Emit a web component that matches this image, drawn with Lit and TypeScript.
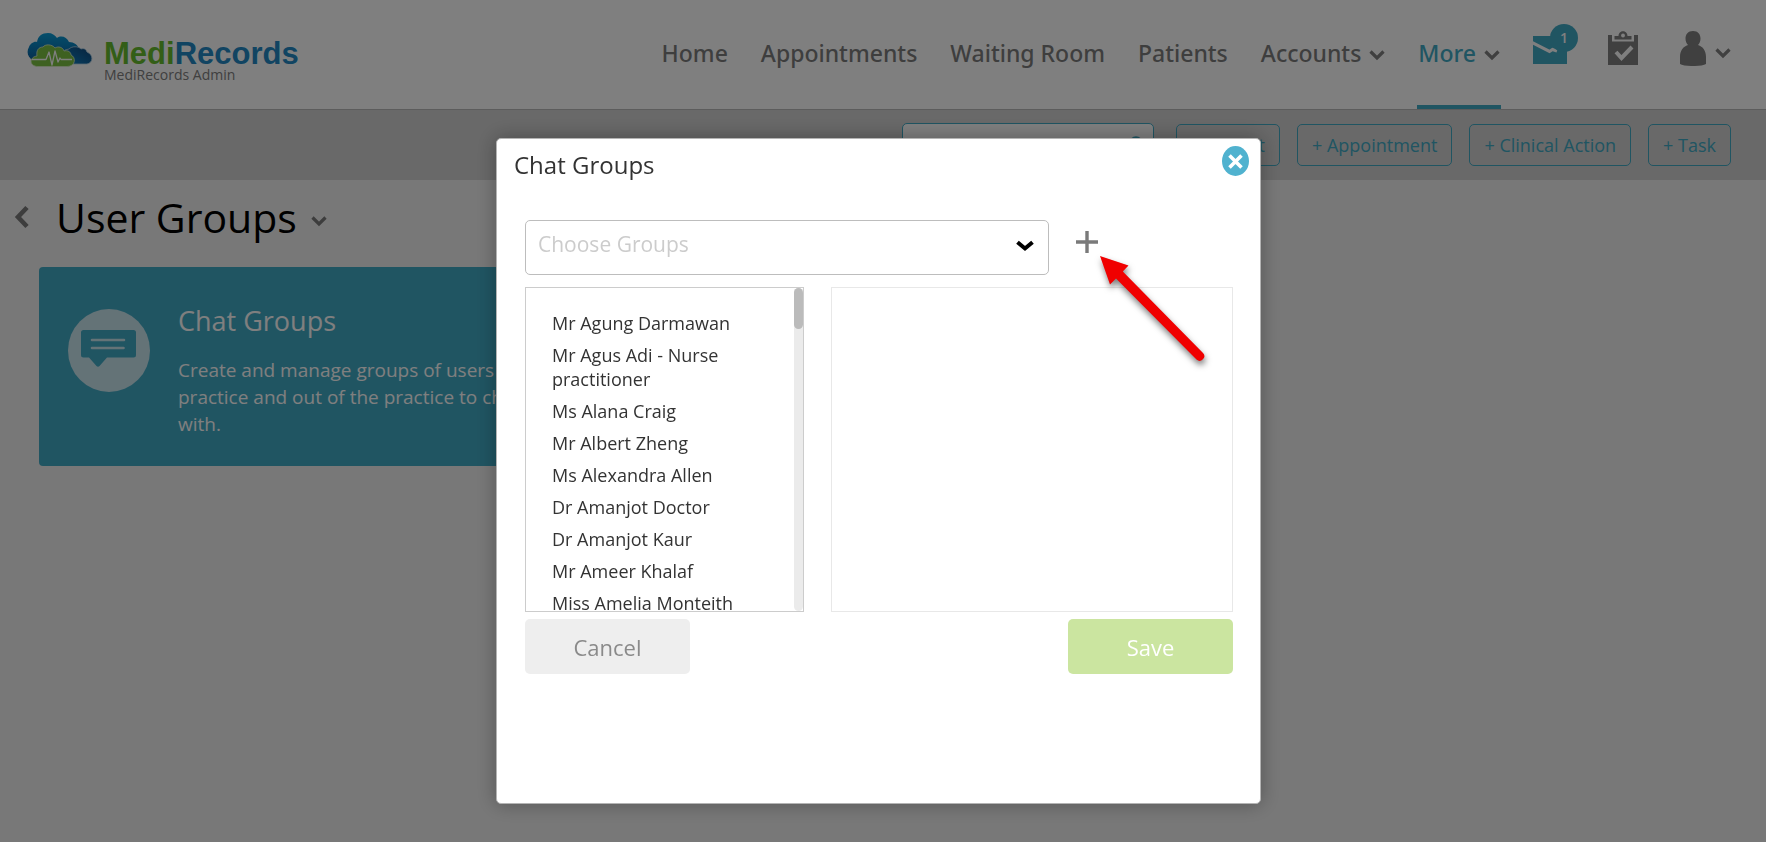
import { LitElement, html, css } from "lit";
import { customElement, state } from "lit/decorators.js";

const chevron = () => html`
  <svg class="caret" width="16" height="12" viewBox="0 0 16 12" aria-hidden="true">
    <path d="M1.500 2.500 L8 9 L14.500 2.500" fill="none" stroke="currentColor" stroke-width="3.200"/>
  </svg>`;

@customElement("mr-logo")
class MrLogo extends LitElement {
  static styles = css`
    :host { display: block; }
    .logo { display: flex; gap: 11px; color: inherit; text-decoration: none; }
    .cloud { flex: none; }
    .text { padding-top: 8px; }
    .word { font: 700 31px/27px "Liberation Sans", Arial, sans-serif; color: #2389c4; }
    .green { color: #66bc2e; }
    .sub { font-size: 14px; line-height: 16px; color: #808080; }
  `;
  render() {
    return html`<a class="logo" href="#home">
      <svg class="cloud" width="66" height="36" viewBox="0 0 66 36" aria-hidden="true">
        <defs>
          <linearGradient id="b" x1="0" y1="0" x2="0" y2="1"><stop offset="0" stop-color="#0a9ed8"/><stop offset="1" stop-color="#0d5c9c"/></linearGradient>
          <linearGradient id="c" x1="1" y1="0" x2="0" y2="1"><stop offset="0" stop-color="#114478"/><stop offset="1" stop-color="#0f82c4"/></linearGradient>
        </defs>
        <path fill="url(#b)" d="M6 28 C1 26 -1 20 2 15 C3 12 7 9 10 10 C11 4 15 1 21 1 C25 1 28 3 30 6 C34 3 40 5 42 10 C47 10 51 13 52 17 L40 30 Z"/>
        <path fill="url(#c)" stroke="#b8d4e6" stroke-width="0.800" d="M40 32 L60 32 C66 31 67 23 60 20 C59 17 57 16 54 17 C51 14 45 14 42 17 L38 18 Z"/>
        <path fill="#7cc243" stroke="#dcedc8" stroke-width="0.800" d="M11 34.500 C2 34.500 2 25 10 24 C9 18 12 15 16 15 C18 12 25 12 28 16 C31 14 36 15 37 19 C41 18 44 20 44 23 C49 25 49 34.500 40 34.500 Z"/>
        <path fill="none" stroke="#fff" stroke-width="1.300" stroke-linejoin="round" d="M5 27.500 H19 L22 20 L25 33 L28 19 L31 30 L33 26 L34 27.500 H45"/>
      </svg>
      <span class="text">
        <div class="word"><span class="green">Medi</span>Records</div>
        <div class="sub">MediRecords Admin</div>
      </span>
    </a>`;
  }
}

@customElement("mr-header")
class MrHeader extends LitElement {
  static styles = css`
    :host { display: block; }
    .bar { display: flex; justify-content: space-between; height: 110px; padding: 0 35px 0 27px; background: #fff; border-bottom: 1px solid #b8b8b8; box-sizing: border-box; }
    mr-logo { margin-top: 32px; }
    .right { display: flex; align-items: stretch; }
    .nav { display: flex; gap: 31px; }
    .link { display: flex; align-items: center; gap: 8px; padding: 0 1px; font-family: "Noto Sans", "Open Sans", sans-serif; font-size: 23px; font-weight: 500; color: #7c7c7c; text-decoration: none; border-bottom: 4px solid transparent; }
    .link.active { color: #41aac5; border-color: #41aac5; }
    .caret { color: #808080; margin-top: 4px; }
    .tools { display: flex; align-items: flex-start; margin-left: 32px; gap: 30px; padding-top: 24px; }
    .tool { display: flex; align-items: flex-start; gap: 9px; border: 0; background: none; padding: 0; color: #808080; font: inherit; }
    .user { margin-left: 12px; }
    .tool .caret { margin-top: 23px; }
    .shape { margin-top: 7px; }
  `;
  render() {
    const links = ["Home", "Appointments", "Waiting Room", "Patients"];
    return html`<header class="bar">
      <mr-logo></mr-logo>
      <div class="right">
        <nav class="nav">
          ${links.map((l) => html`<a class="link" href="#">${l}</a>`)}
          <a class="link" href="#">Accounts ${chevron()}</a>
          <a class="link active" href="#">More ${chevron()}</a>
        </nav>
        <div class="tools">
          <button class="tool" aria-label="Messages, 1 unread">
            <svg width="45" height="41" viewBox="0 0 45 41">
              <path fill="#41aac5" d="M0 12 H34 V40 H0 Z"/>
              <path fill="none" stroke="#fff" stroke-width="3.200" d="M-1 18.500 L16.500 27.500 L19.500 25.500 L24 27"/>
              <circle cx="31" cy="14" r="14" fill="#41aac5"/>
              <text x="31" y="19" text-anchor="middle" fill="#fff" font-size="14" font-weight="600">1</text>
            </svg>
          </button>
          <button class="tool" aria-label="Tasks">
            <svg class="shape" width="30" height="35" viewBox="0 0 30 35">
              <path fill="#808080" d="M0 4 H4 V10.500 H26 V4 H30 V34 H0 Z"/>
              <path fill="#808080" d="M6.500 5 H10.500 C10.500 -1.500 19.500 -1.500 19.500 5 H23.500 V8.500 H6.500 Z"/>
              <circle cx="15" cy="4.500" r="1.900" fill="#fff"/>
              <path fill="none" stroke="#fff" stroke-width="4" d="M8 21 L13.500 27 L24 16"/>
            </svg>
          </button>
          <button class="tool user" aria-label="Account">
            <svg class="shape" width="26" height="35" viewBox="0 0 26 35">
              <path fill="#808080" d="M13 0 C18 0 20.500 3.500 20.500 7.500 C20.500 10.500 19.500 12.500 18 14 C23 15.500 26 20 26 26 V33 C22 35.700 4 35.700 0 33 V26 C0 20 3 15.500 8 14 C6.500 12.500 5.500 10.500 5.500 7.500 C5.500 3.500 8 0 13 0 Z"/>
            </svg>
            ${chevron()}
          </button>
        </div>
      </div>
    </header>`;
  }
}

@customElement("mr-toolbar")
class MrToolbar extends LitElement {
  static styles = css`
    :host { display: block; }
    .bar { display: flex; justify-content: flex-end; align-items: center; gap: 17px; height: 70px; padding-right: 35px; background: #d2d2d2; }
    .search { display: flex; align-items: center; box-sizing: border-box; width: 252px; height: 44px; padding: 0 9px 0 12px; margin-right: 5px; border: 1px solid #41aac5; border-radius: 5px; background: #fff; color: #41aac5; }
    .field { flex: 1; min-width: 0; border: 0; background: none; font: inherit; font-size: 16px; padding: 0 2px; }
    .field::placeholder { color: #999; }
    .add { height: 42px; padding: 0 14px; border: 1px solid #41aac5; border-radius: 5px; background: none; color: #41aac5; font: inherit; font-size: 18px; }
  `;
  render() {
    return html`<div class="bar">
      <label class="search">
        <input class="field" type="search" placeholder="Find patient" aria-label="Find patient" />
        <svg width="18" height="18" viewBox="0 0 18 18" aria-hidden="true"><circle cx="10" cy="7" r="5.500" fill="none" stroke="currentColor" stroke-width="2.500"/><path d="M6 11 L1 17" stroke="currentColor" stroke-width="3"/></svg>
      </label>
      ${["Patient", "Appointment", "Clinical Action", "Task"].map((t) => html`<button class="add">+ ${t}</button>`)}
    </div>`;
  }
}

@customElement("mr-group-card")
class MrGroupCard extends LitElement {
  static styles = css`
    :host { display: block; }
    .card { display: flex; gap: 28px; box-sizing: border-box; min-height: 199px; padding: 36px 29px 24px; border-radius: 4px; background: #41aac5; color: #fff; text-decoration: none; }
    .icon { flex: none; margin-top: 6px; }
    .name { margin: 0; font-size: 27px; line-height: 36px; font-weight: 400; }
    .about { margin: 18px 0 0; font-size: 19px; line-height: 27px; }
  `;
  render() {
    return html`<a class="card" href="#chat-groups">
      <svg class="icon" width="82" height="83" viewBox="0 0 82 83" aria-hidden="true">
        <ellipse cx="41" cy="41.500" rx="41" ry="41.500" fill="#c8e6ef"/>
        <path fill="#41aac5" d="M15.500 21 H65.500 Q68 21 68 23.500 V46 Q68 48.500 65.500 48.500 H39 L31.500 57 Q30 58.500 28.500 57 L21 48.500 H15.500 Q13 48.500 13 46 V23.500 Q13 21 15.500 21 Z"/>
        <path stroke="#c8e6ef" stroke-width="2.600" stroke-linecap="round" d="M24 31 H56 M24 39 H55.500"/>
      </svg>
      <div>
        <h2 class="name">Chat Groups</h2>
        <p class="about">Create and manage groups of users in the practice and out of the practice to chat with.</p>
      </div>
    </a>`;
  }
}

@customElement("mr-chat-dialog")
class MrChatDialog extends LitElement {
  @state() private people = [
    "Mr Agung Darmawan", "Mr Agus Adi - Nurse practitioner", "Ms Alana Craig", "Mr Albert Zheng",
    "Ms Alexandra Allen", "Dr Amanjot Doctor", "Dr Amanjot Kaur", "Mr Ameer Khalaf", "Miss Amelia Monteith",
  ];
  static styles = css`
    :host { display: block; }
    .dialog { position: relative; box-sizing: border-box; min-height: 666px; padding: 6px 27px 28px 28px; border: 1px solid #b4b4b4; border-radius: 5px; background: #fff; box-shadow: 0 0 20px rgba(0, 0, 0, 0.3); color: #333; }
    .head { display: flex; justify-content: space-between; align-items: flex-start; height: 75px; margin: 0 -16px 0 -11px; }
    .title { margin: 0; font-size: 24px; line-height: 40px; font-weight: 400; }
    .close { display: block; padding: 1px 0 0; border: 0; background: none; line-height: 0; }
    .choose { display: flex; gap: 25px; margin-bottom: 12px; }
    .pick { position: relative; flex: none; width: 524px; color: #000; }
    .select { appearance: none; display: block; width: 100%; height: 55px; padding: 0 48px 7px 12px; border: 1px solid #bdbdbd; border-radius: 5px; background: #fff; color: #ccc; font: inherit; font-size: 21px; }
    .arrow { position: absolute; right: 15px; top: 20px; pointer-events: none; }
    .plus { align-self: flex-start; margin-top: 9px; padding: 0; border: 0; background: none; line-height: 0; }
    .panes { display: grid; grid-template-columns: 279px 1fr; gap: 27px; height: 325px; }
    .people { display: flex; min-height: 0; border: 1px solid #ccc; }
    .names { flex: 1; margin: 0; padding: 19px 26px 0; list-style: none; overflow: hidden; }
    .person { display: block; width: 100%; padding: 4px 0; border: 0; background: none; color: #333; font: inherit; font-size: 18px; line-height: 24px; text-align: left; }
    .track { flex: none; width: 9px; border-radius: 5px; background: #ebebeb; }
    .thumb { height: 41px; border-radius: 5px; background: #bbb; }
    .chosen { border: 1px solid #e8e8e8; }
    .foot { display: flex; justify-content: space-between; margin-top: 7px; }
    .btn { width: 165px; height: 55px; border: 0; border-radius: 5px; font: inherit; font-size: 22px; }
    .cancel { background: #eee; color: #8a8a8a; }
    .save { background: #cbe5a0; color: #fff; }
    .pointer { position: absolute; left: 597px; top: 111px; pointer-events: none; filter: drop-shadow(1px 4px 3px rgba(0, 0, 0, 0.5)); }
  `;
  render() {
    return html`<section class="dialog" role="dialog" aria-labelledby="t">
      <div class="head">
        <h2 class="title" id="t">Chat Groups</h2>
        <button class="close" aria-label="Close">
          <svg width="27" height="30" viewBox="0 0 27 30"><ellipse cx="13.500" cy="15" rx="13.500" ry="15" fill="#50b2cf"/><path d="M7.500 9.500 L19.500 21.500 M19.500 9.500 L7.500 21.500" stroke="#fff" stroke-width="3.600"/></svg>
        </button>
      </div>
      <div class="choose">
        <div class="pick">
          <select class="select" aria-label="Choose Groups"><option>Choose Groups</option></select>
          <svg class="arrow" width="18" height="12" viewBox="0 0 18 12" aria-hidden="true"><path d="M1.500 2.200 L9 8.500 L16.500 2.200" fill="none" stroke="#000" stroke-width="4"/></svg>
        </div>
        <button class="plus" aria-label="Add group">
          <svg width="26" height="26" viewBox="0 0 26 26"><path d="M13 2 V24 M2 13 H24" stroke="#7a7a7a" stroke-width="3.400"/></svg>
        </button>
      </div>
      <div class="panes">
        <div class="people">
          <ul class="names">${this.people.map((p) => html`<li><button class="person">${p}</button></li>`)}</ul>
          <div class="track"><div class="thumb"></div></div>
        </div>
        <div class="chosen"></div>
      </div>
      <div class="foot">
        <button class="btn cancel">Cancel</button>
        <button class="btn save">Save</button>
      </div>
      <svg class="pointer" width="120" height="120" viewBox="1094 250 120 120" aria-hidden="true">
        <path fill="#f00000" d="M1100 256 L1128.500 265.500 L1122.800 271.600 L1203 353 A4.600 4.600 0 0 1 1196.500 359.500 L1116 278.500 L1110 284.500 Z"/>
      </svg>
    </section>`;
  }
}

@customElement("app-root")
class AppRoot extends LitElement {
  static styles = css`
    :host { display: block; min-height: 100vh; background: #f0f0f0; font-family: "Open Sans", "Noto Sans", sans-serif; color: #000; }
    .heading { display: flex; align-items: center; gap: 14px; height: 73px; padding: 0 14px; }
    .back { display: flex; padding: 0; border: 0; background: none; color: #7a7a7a; }
    .title { margin: 0 0 0 12px; font-size: 41px; line-height: 56px; font-weight: 400; }
    .caret { color: #7a7a7a; margin-top: 8px; }
    .cards { display: grid; grid-template-columns: repeat(auto-fill, minmax(500px, 1fr)); gap: 24px; padding: 14px 39px; }
    .overlay { position: fixed; inset: 0; display: flex; justify-content: center; align-items: flex-start; padding: 138px 9px 0 0; background: rgba(0, 0, 0, 0.5); overflow: hidden; }
    .modal { width: 765px; max-width: 100%; }
  `;
  render() {
    return html`
      <mr-header></mr-header>
      <mr-toolbar></mr-toolbar>
      <main>
        <div class="heading">
          <button class="back" aria-label="Back"><svg width="16" height="24" viewBox="0 0 16 24"><path d="M13 2.500 L4 12 L13 21.500" fill="none" stroke="currentColor" stroke-width="4.600"/></svg></button>
          <h1 class="title">User Groups</h1>
          ${chevron()}
        </div>
        <div class="cards"><mr-group-card></mr-group-card></div>
      </main>
      <div class="overlay"><mr-chat-dialog class="modal"></mr-chat-dialog></div>
    `;
  }
}
